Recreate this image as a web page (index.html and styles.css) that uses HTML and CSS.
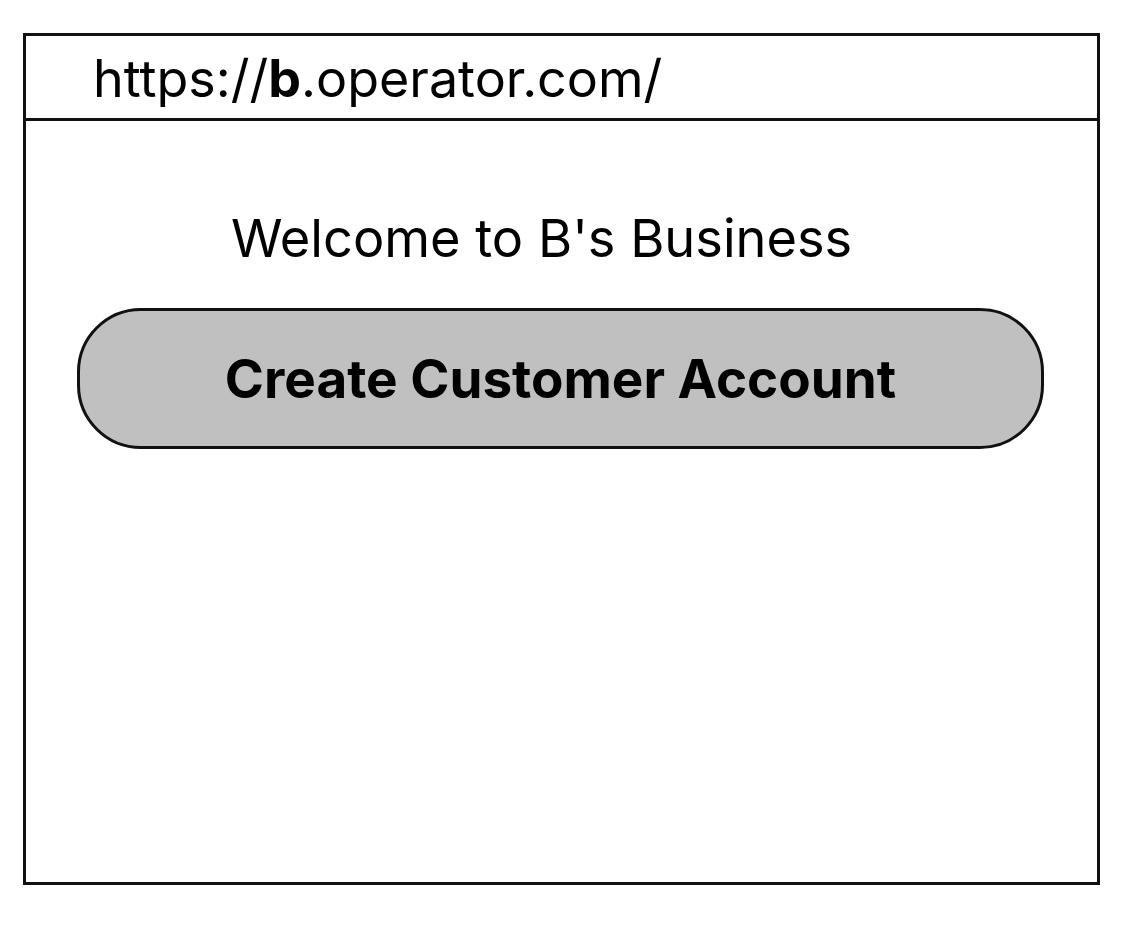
FILE: index.html
```html
<!DOCTYPE html>
<html>
<head>
<meta charset="utf-8">
<link rel="stylesheet" href="styles.css">
</head>
<body>
<div class="frame">
  <div class="addressbar"><span class="url">https://<b>b</b>.operator.com/</span></div>
  <div class="content">
    <h1 class="welcome">Welcome to B's Business</h1>
    <button class="cta">Create Customer Account</button>
  </div>
</div>
</body>
</html>
```
FILE: styles.css
```css
html, body {
  margin: 0;
  padding: 0;
  background: #ffffff;
}
body {
  font-family: Inter, "Liberation Sans", sans-serif;
  color: #000;
  padding: 33px 0 0 23px;
}
.frame {
  box-sizing: border-box;
  width: 1077px;
  height: 852px;
  border: 3px solid #111;
  display: flex;
  flex-direction: column;
}
.addressbar {
  box-sizing: border-box;
  flex: 0 0 85px;
  height: 85px;
  border-bottom: 3px solid #111;
  display: flex;
  align-items: center;
  padding-left: 67px;
  padding-top: 3px;
}
.url {
  font-size: 52px;
  font-weight: 400;
  line-height: 60px;
}
.url b {
  font-weight: 700;
}
.content {
  display: flex;
  flex-direction: column;
  align-items: flex-start;
  padding: 0 0 0 51px;
}
.welcome {
  margin: 87px 0 0 154px;
  font-size: 52.3px;
  font-weight: 400;
  line-height: 60px;
}
.cta {
  box-sizing: border-box;
  flex: 0 0 141px;
  margin-top: 40px;
  width: 967px;
  height: 141px;
  background: #c0c0c0;
  border: 3px solid #111;
  border-radius: 64px;
  font-family: Inter, "Liberation Sans", sans-serif;
  font-size: 53px;
  font-weight: 700;
  color: #000;
  padding: 0;
}
```
